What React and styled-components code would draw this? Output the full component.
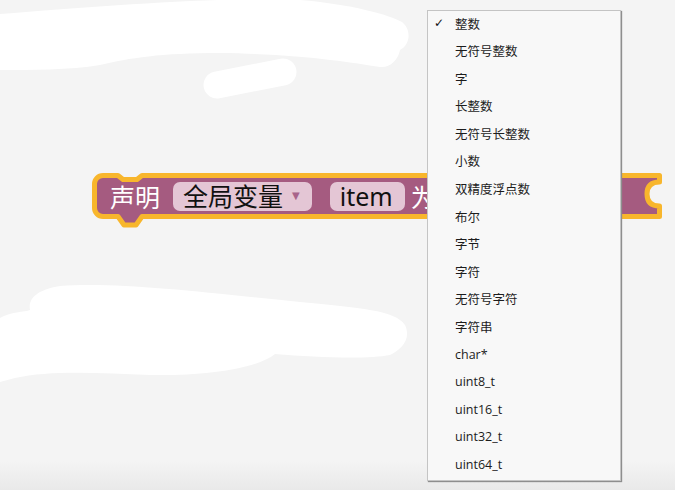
import React from 'react';
import styled, { createGlobalStyle } from 'styled-components';

const GlobalStyle = createGlobalStyle`
  html, body {
    margin: 0;
    padding: 0;
    background: #f3f3f3;
  }
`;

const types = [
  '整数',
  '无符号整数',
  '字',
  '长整数',
  '无符号长整数',
  '小数',
  '双精度浮点数',
  '布尔',
  '字节',
  '字符',
  '无符号字符',
  '字符串',
  'char*',
  'uint8_t',
  'uint16_t',
  'uint32_t',
  'uint64_t',
];

const App = () => {
  return (
    <>
      <GlobalStyle />
      <Workspace>
        <Scribbles width="675" height="490" viewBox="0 0 675 490">
          <path
            d="M0,14 C80,8 220,-4 300,0 C350,4 390,15 402,22 C412,30 410,45 400,50 C398,60 390,68 380,67 C350,62 300,54 220,53 C160,53 130,58 100,65 C70,70 30,70 0,70 Z"
            fill="#ffffff"
          />
          <line x1="217" y1="85" x2="283" y2="72" stroke="#ffffff" strokeWidth="27" strokeLinecap="round" />
          <path
            d="M0,318 C10,312 25,312 30,310 C28,300 35,290 60,286 C120,282 200,292 300,302 C360,308 395,310 405,325 C412,340 400,350 390,355 C370,359 320,358 275,354 C255,370 200,376 150,375 C100,373 50,370 15,378 L0,382 Z"
            fill="#ffffff"
          />
        </Scribbles>

        <Block>
          <BlockShape width="580" height="62" viewBox="0 0 580 62">
            <path
              d="M4.5,14 A8.5,8.5 0 0 1 13,5.5 L28,5.5 L33,9.5 L47,9.5 L52,5.5 L569.5,5.5 L569.5,12 C560,12 557,17 557,24 C557,31 560,36 569.5,36 L569.5,46.5 L52,46.5 L46,55 L34,55 L28,46.5 L13,46.5 A8.5,8.5 0 0 1 4.5,38 Z"
              fill="#a55b80"
              stroke="#f8b62c"
              strokeWidth="5"
              strokeLinejoin="round"
            />
          </BlockShape>
          <BlockRow>
            <Label>声明</Label>
            <Field $gap={13} $left={10} $right={12}>
              全局变量<Arrow>▼</Arrow>
            </Field>
            <Field $gap={18} $left={10} $right={12}>item</Field>
            <Label $gap={6}>为</Label>
          </BlockRow>
        </Block>

        <Menu>
          {types.map((t, i) => (
            <MenuItem key={t}>
              <Check>{i === 0 ? '✓' : ''}</Check>
              {t}
            </MenuItem>
          ))}
        </Menu>
      </Workspace>
    </>
  );
};

export default App;

const Workspace = styled.div`
  position: relative;
  width: 675px;
  height: 490px;
  overflow: hidden;
  background: linear-gradient(#f4f4f4 94%, #e9e9e9);
  font-family: 'Noto Sans', 'Noto Sans CJK SC', sans-serif;
`;

const Scribbles = styled.svg`
  position: absolute;
  left: 0;
  top: 0;
`;

const Block = styled.div`
  position: absolute;
  left: 90px;
  top: 170px;
  width: 580px;
  height: 62px;
`;

const BlockShape = styled.svg`
  position: absolute;
  left: 0;
  top: 0;
`;

const BlockRow = styled.div`
  position: relative;
  display: flex;
  align-items: center;
  height: 36px;
  margin-top: 8px;
  padding-left: 20px;
  white-space: nowrap;
`;

const Label = styled.span`
  margin-left: ${({ $gap }) => $gap || 0}px;
  color: #ffffff;
  font-family: 'Noto Sans CJK SC', sans-serif;
  font-size: 25px;
  line-height: 1;
`;

const Field = styled.span`
  display: flex;
  align-items: center;
  height: 29px;
  margin-left: ${({ $gap }) => $gap}px;
  padding: 0 ${({ $right }) => $right}px 0 ${({ $left }) => $left}px;
  border-radius: 7px;
  background: #e4c6d5;
  color: #111111;
  font-family: 'Noto Sans', 'Noto Sans CJK SC', sans-serif;
  font-size: 25px;
  line-height: 1;
`;

const Arrow = styled.span`
  margin-left: 9px;
  color: #a8638a;
  font-family: 'DejaVu Sans', sans-serif;
  font-size: 10px;
`;

const Menu = styled.div`
  position: absolute;
  left: 427px;
  top: 10px;
  width: 192px;
  display: flex;
  flex-direction: column;
  background: #f8f8f8;
  border: 1px solid #c4c4c4;
  box-shadow: 1px 1px 1px #8e8e8e;
`;

const MenuItem = styled.div`
  display: flex;
  align-items: center;
  height: 27.6px;
  padding-bottom: 3.6px;
  box-sizing: border-box;
  color: #1c1c1c;
  font-family: 'Open Sans', 'Noto Sans CJK SC', sans-serif;
  font-size: 12.5px;
`;

const Check = styled.span`
  width: 21px;
  padding-left: 6px;
  color: #111111;
  font-family: 'DejaVu Sans', sans-serif;
  font-size: 12px;
`;
